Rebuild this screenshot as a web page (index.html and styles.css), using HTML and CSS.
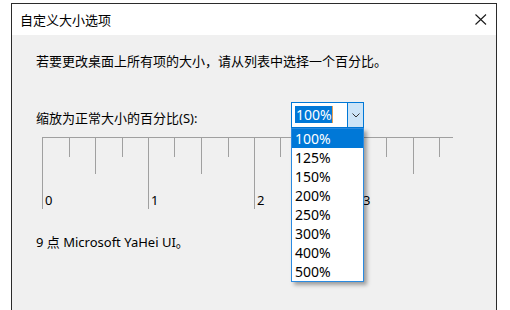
FILE: index.html
```html
<!DOCTYPE html>
<html lang="zh-CN">
<head>
<meta charset="utf-8">
<title>自定义大小选项</title>
<link rel="stylesheet" href="styles.css">
</head>
<body>
<div class="window">
  <div class="titlebar">
    <span class="title">自定义大小选项</span>
    <svg class="close" width="12" height="11" viewBox="0 0 12 11"><path d="M0.5 0.5 L11 10.5 M11 0.5 L0.5 10.5" stroke="#1a1a1a" stroke-width="1.1" fill="none"/></svg>
  </div>
  <div class="content">
    <p class="intro">若要更改桌面上所有项的大小，请从列表中选择一个百分比。</p>
    <div class="row">
      <span class="label">缩放为正常大小的百分比(S):</span>
      <div class="combo">
        <div class="combo-field"><span class="sel">100%</span></div>
        <div class="combo-btn">
          <svg width="8" height="5" viewBox="0 0 8 5"><polyline points="0.5,0.5 4,4 7.5,0.5" stroke="#333" stroke-width="1" fill="none"/></svg>
        </div>
        <ul class="list">
          <li class="active">100%</li>
          <li>125%</li>
          <li>150%</li>
          <li>200%</li>
          <li>250%</li>
          <li>300%</li>
          <li>400%</li>
          <li>500%</li>
        </ul>
      </div>
    </div>
    <svg class="ruler" width="412" height="72" viewBox="0 0 412 72">
      <g stroke="#a0a0a0" stroke-width="1" fill="none">
        <line x1="0" y1="0.5" x2="411" y2="0.5"/>
        <line x1="0.5" y1="0" x2="0.5" y2="72"/>
        <line x1="27.5" y1="1" x2="27.5" y2="20"/>
        <line x1="53.5" y1="1" x2="53.5" y2="37"/>
        <line x1="80.5" y1="1" x2="80.5" y2="20"/>
        <line x1="106.5" y1="1" x2="106.5" y2="72"/>
        <line x1="132.5" y1="1" x2="132.5" y2="20"/>
        <line x1="159.5" y1="1" x2="159.5" y2="37"/>
        <line x1="186.5" y1="1" x2="186.5" y2="20"/>
        <line x1="212.5" y1="1" x2="212.5" y2="72"/>
        <line x1="238.5" y1="1" x2="238.5" y2="20"/>
        <line x1="265.5" y1="1" x2="265.5" y2="37"/>
        <line x1="291.5" y1="1" x2="291.5" y2="20"/>
        <line x1="318.5" y1="1" x2="318.5" y2="72"/>
        <line x1="344.5" y1="1" x2="344.5" y2="20"/>
        <line x1="371.5" y1="1" x2="371.5" y2="37"/>
        <line x1="397.5" y1="1" x2="397.5" y2="20"/>
      </g>
      <g class="ruler-text">
        <text x="3" y="68">0</text>
        <text x="109" y="68">1</text>
        <text x="215" y="68">2</text>
        <text x="321" y="68">3</text>
      </g>
    </svg>
    <p class="font-info">9 点 Microsoft YaHei UI。</p>
  </div>
</div>
</body>
</html>
```
FILE: styles.css
```css
html, body {
  margin: 0;
  padding: 0;
  background: #ffffff;
}
body {
  font-family: "Noto Sans", "Noto Sans CJK SC", sans-serif;
  font-size: 13px;
  line-height: 16px;
  color: #000;
}
.window {
  margin: 3px 0 0 11px;
  width: 486px;
  height: 307px;
  box-sizing: border-box;
  border: 1px solid #2b2b2b;
  border-bottom: none;
  background: #f0f0f0;
}
.titlebar {
  height: 31px;
  background: #fff;
  display: flex;
  align-items: center;
  justify-content: space-between;
  padding: 0 9px 0 8px;
}
.title {
  font-size: 13px;
}
.close {
  display: block;
}
.content {
  padding: 18px 0 0 24px;
}
.intro {
  margin: 0;
}
.row {
  display: flex;
  margin-top: 33px;
}
.label {
  width: 255px;
  padding-top: 8px;
}
.combo {
  position: relative;
  width: 73px;
  height: 26px;
  box-sizing: border-box;
  border: 1px solid #0078d7;
  background: #fff;
  display: flex;
}
.combo-field {
  flex: 1;
  padding: 3px 0 0 3px;
}
.sel {
  display: inline-block;
  background: #0078d7;
  color: #fff;
  font-size: 14px;
  line-height: 17px;
  padding: 0 0 0 1px;
  border-right: 1px solid #e8a050;
}
.combo-btn {
  width: 15px;
  background: #cce4f7;
  border-left: 1px solid #0078d7;
  display: flex;
  align-items: center;
  justify-content: center;
}
.list {
  position: absolute;
  top: 25px;
  left: -1px;
  width: 73px;
  box-sizing: border-box;
  margin: 0;
  padding: 0;
  list-style: none;
  background: #fff;
  border: 1px solid #2a8ae0;
  box-shadow: 3px 3px 4px rgba(0, 0, 0, 0.35);
  z-index: 2;
}
.list li {
  height: 19px;
  line-height: 19px;
  padding-left: 3px;
  font-size: 14px;
}
.list li.active {
  background: #0078d7;
  color: #fff;
}
.ruler {
  display: block;
  margin: 9px 0 0 6px;
}
.ruler-text {
  font-family: "Noto Sans", sans-serif;
  font-size: 13px;
  fill: #000;
}
.font-info {
  margin: 25px 0 0 0;
}
```
